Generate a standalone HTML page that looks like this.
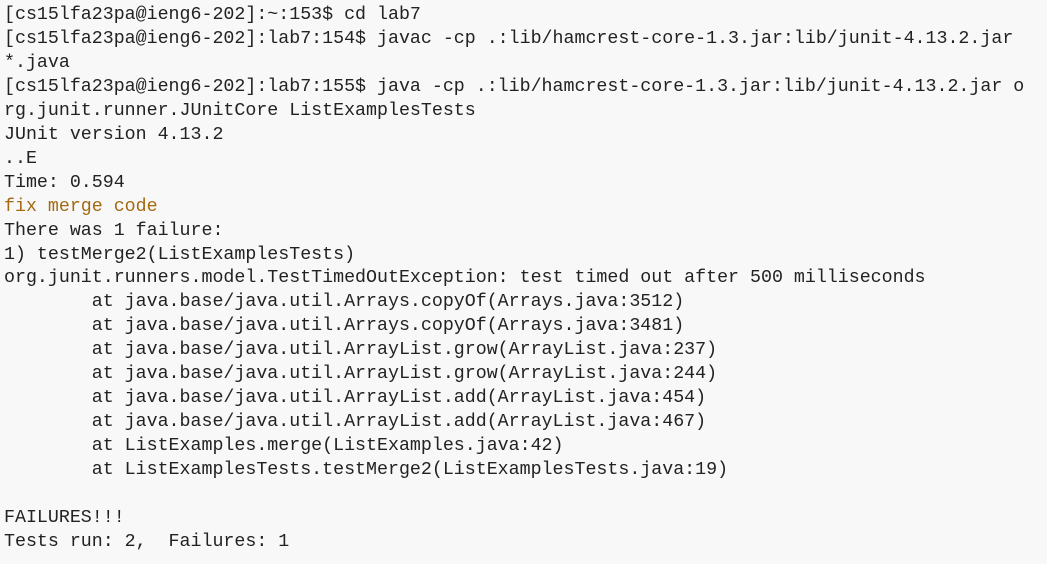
<!DOCTYPE html>
<html><head><style>
html,body{margin:0;padding:0;background:#f8f8f8;width:1047px;height:564px;overflow:hidden}
pre{margin:0;padding:4px 0 0 4px;font-family:"Liberation Mono",monospace;font-size:18.3px;line-height:23.95px;color:#222}
.o{color:#a36a12}
</style></head><body><pre>[cs15lfa23pa@ieng6-202]:~:153$ cd lab7
[cs15lfa23pa@ieng6-202]:lab7:154$ javac -cp .:lib/hamcrest-core-1.3.jar:lib/junit-4.13.2.jar
*.java
[cs15lfa23pa@ieng6-202]:lab7:155$ java -cp .:lib/hamcrest-core-1.3.jar:lib/junit-4.13.2.jar o
rg.junit.runner.JUnitCore ListExamplesTests
JUnit version 4.13.2
..E
Time: 0.594
<span class="o">fix merge code</span>
There was 1 failure:
1) testMerge2(ListExamplesTests)
org.junit.runners.model.TestTimedOutException: test timed out after 500 milliseconds
        at java.base/java.util.Arrays.copyOf(Arrays.java:3512)
        at java.base/java.util.Arrays.copyOf(Arrays.java:3481)
        at java.base/java.util.ArrayList.grow(ArrayList.java:237)
        at java.base/java.util.ArrayList.grow(ArrayList.java:244)
        at java.base/java.util.ArrayList.add(ArrayList.java:454)
        at java.base/java.util.ArrayList.add(ArrayList.java:467)
        at ListExamples.merge(ListExamples.java:42)
        at ListExamplesTests.testMerge2(ListExamplesTests.java:19)

FAILURES!!!
Tests run: 2,  Failures: 1
</pre></body></html>
